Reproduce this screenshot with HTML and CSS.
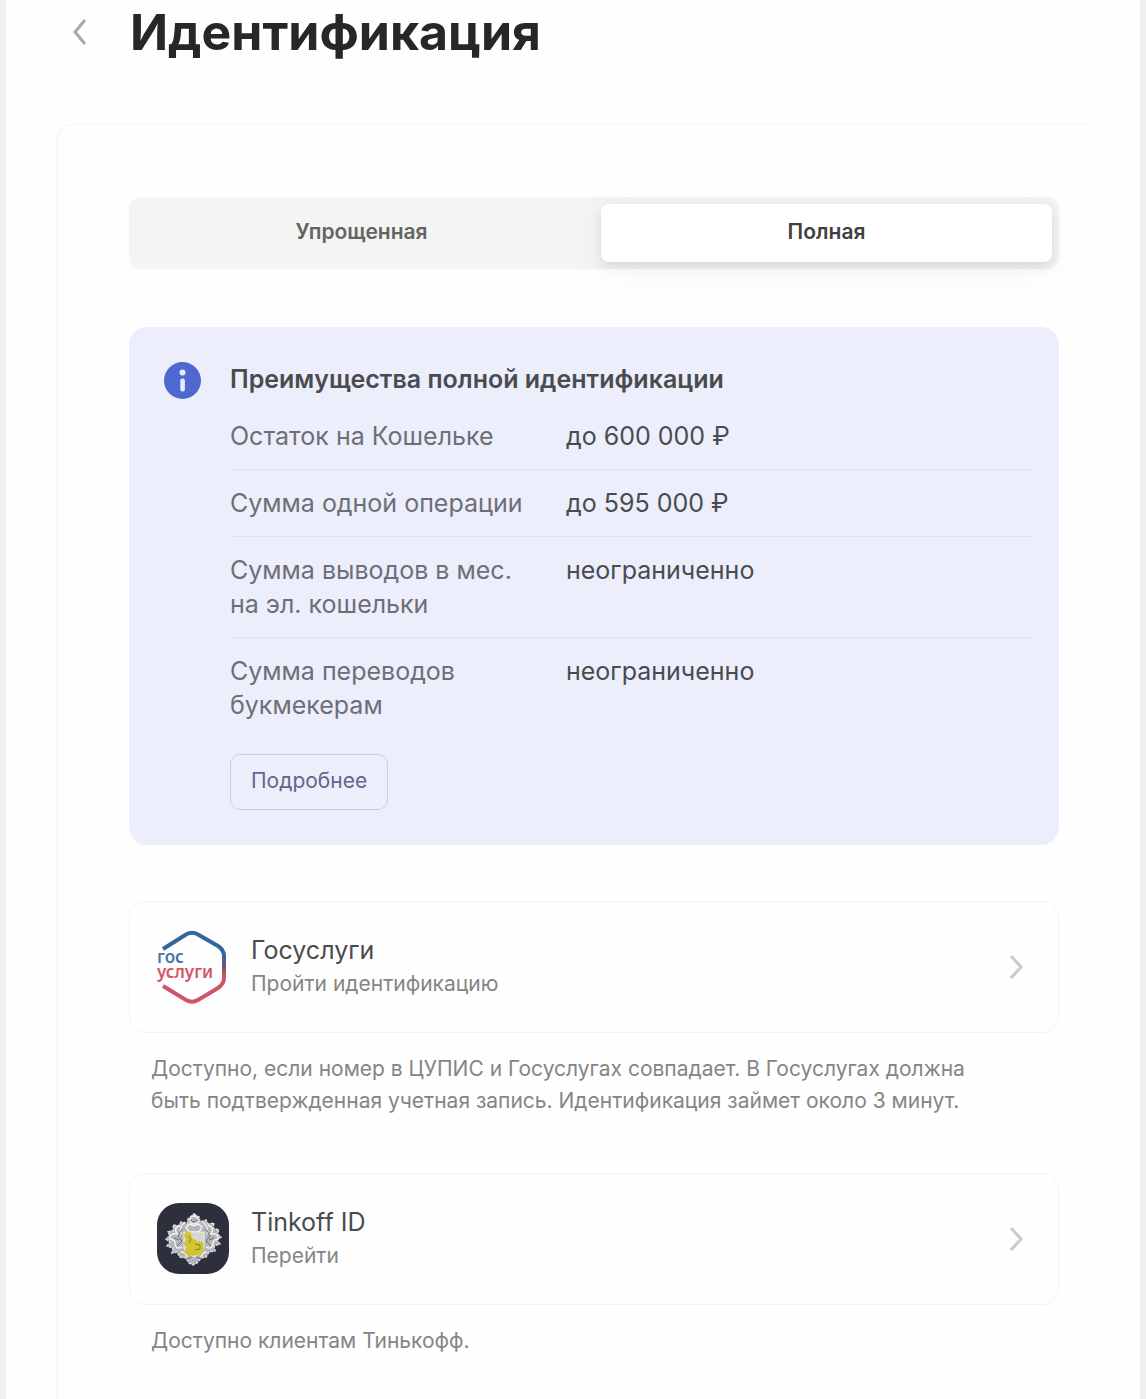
FILE: index.html
```html
<!DOCTYPE html>
<html lang="ru">
<head>
  <meta charset="UTF-8" />
  <meta name="viewport" content="width=device-width, initial-scale=1.0"/>
  <title>Идентификация</title>
  <link rel="stylesheet" href="styles.css">
</head>
<body>

  <div class="page">
    <header class="header">
      <button class="back" type="button" aria-label="Назад">
        <svg width="16" height="28" viewBox="0 0 16 28"><path d="M13 2L3 14l10 12" fill="none" stroke="#a9a9a9" stroke-width="3"/></svg>
      </button>
      <h1>Идентификация</h1>
    </header>

    <main class="content">
      <div class="tabs" role="tablist">
        <button class="tab" type="button" role="tab" aria-selected="false">Упрощенная</button>
        <button class="tab active" type="button" role="tab" aria-selected="true">Полная</button>
      </div>

      <section class="info">
        <svg class="info-icon" width="37" height="37" viewBox="0 0 37 37">
          <circle cx="18.5" cy="18.5" r="18.5" fill="#4f68cf"/>
          <circle cx="18.5" cy="10.5" r="3" fill="#e6eaff"/>
          <rect x="16.3" y="16.5" width="4.6" height="13" rx="2" fill="#e6eaff"/>
        </svg>
        <div class="info-body">
          <h2>Преимущества полной идентификации</h2>
          <table class="limits">
            <tr><th scope="row">Остаток на Кошельке</th><td>до 600 000 ₽</td></tr>
            <tr><th scope="row">Сумма одной операции</th><td>до 595 000 ₽</td></tr>
            <tr><th scope="row">Сумма выводов в мес. на эл. кошельки</th><td>неограниченно</td></tr>
            <tr><th scope="row">Сумма переводов букмекерам</th><td>неограниченно</td></tr>
          </table>
          <button class="more" type="button">Подробнее</button>
        </div>
      </section>

      <a class="method" href="#gosuslugi">
        <svg class="logo" width="72" height="74" viewBox="0 0 72 74">
          <defs>
            <linearGradient id="hex" gradientUnits="userSpaceOnUse" x1="0" y1="0" x2="0" y2="74">
              <stop offset="0.35" stop-color="#33679c"/>
              <stop offset="0.5" stop-color="#75507d"/>
              <stop offset="0.6" stop-color="#cf5566"/>
            </linearGradient>
          </defs>
          <path d="M6 19L29 4.500Q35 1 41 4.500L61 16Q67 20 67 26V48Q67 54 61 58L41 70Q35 73.500 29 70L6 56" fill="none" stroke="url(#hex)" stroke-width="4"/>
          <text class="logo-text"><tspan x="0" y="33" fill="#4477aa">гос</tspan><tspan x="0" y="48" fill="#d4566a">услуги</tspan></text>
        </svg>
        <span class="method-text">
          <span class="method-name">Госуслуги</span>
          <span class="method-action">Пройти идентификацию</span>
        </span>
        <svg class="chevron" width="16" height="26" viewBox="0 0 16 26"><path d="M2 2l10 11L2 24" fill="none" stroke="#cbcbcb" stroke-width="3"/></svg>
      </a>
      <p class="note">Доступно, если номер в ЦУПИС и Госуслугах совпадает. В Госуслугах должна быть подтвержденная учетная запись. Идентификация займет около 3 минут.</p>

      <a class="method" href="#tinkoff">
        <svg class="logo" width="72" height="74" viewBox="0 0 72 74">
          <rect y="1" width="72" height="71" rx="22" fill="#2d303c"/>
          <!-- mantling -->
          <path d="M37 12l5 3 1 5 6-2 2 4 6-1-1 5 6 2-2 4 4 3-4 3 3 4-6 2 1 5-6 1-3 5-5 1-4 5-4 2-4-2-3-5-6-1-3-5-5 1 1-5-6-2 3-4-4-3 4-3-2-4 6-2-1-5 6 1 2-4 6 2 1-5z" fill="#b4b5b8" stroke="#dedede" stroke-width="1.500" stroke-dasharray="3 1"/>
          <g fill="none" stroke="#f1f1f1" stroke-width="1.500">
            <path d="M23 23q-7 3-3 9q-8-1-7 5q6 1 5 5q1 6 7 3M51 23q7 3 3 9q8-1 7 5q-6 1-5 5q-1 6-7 3M28 20q-6 5-4 12M46 20q6 5 4 12M24 50q5 0 6 5M50 50q-5 0-6 5"/>
            <circle cx="37" cy="18" r="4"/>
            <path d="M29 25l4-3 4 2 4-2 4 3-3 5H32z"/>
          </g>
          <g fill="none" stroke="#6b6e76" stroke-width="1">
            <path d="M25 27l-4 7 4 5-5 5M49 27l4 7-4 5 5 5M33 18l4 2 4-2M30 57l7-3 7 3M17 36l5 2M57 36l-5 2"/>
          </g>
          <path d="M27 30h20v16q0 5-10 9q-10-4-10-9z" fill="#d6d6cc" stroke="#eee" stroke-width="1"/>
          <path d="M29 28l5 3 1 5 5 3 6 1 1 9-4 4-12 1-4-4 3-5-4-3 3-4-2-4z" fill="#d2c433"/>
          <path d="M31 34l3 3-2 4M38 42l5 1v4l-5 1" fill="none" stroke="#8a7f28" stroke-width="1"/>
        </svg>
        <span class="method-text">
          <span class="method-name">Tinkoff ID</span>
          <span class="method-action">Перейти</span>
        </span>
        <svg class="chevron" width="16" height="26" viewBox="0 0 16 26"><path d="M2 2l10 11L2 24" fill="none" stroke="#cbcbcb" stroke-width="3"/></svg>
      </a>
      <p class="note">Доступно клиентам Тинькофф.</p>
    </main>
  </div>

</body>
</html>
```

FILE: styles.css
```css
* {
  box-sizing: border-box;
}

body {
  margin: 0;
  padding: 0 6px;
  background-color: #eff0f2;
  color: #4a4b4f;
  font-family: Inter, "Liberation Sans", sans-serif;
  font-size: 25px;
  line-height: 34px;
}

button {
  border: none;
  background: none;
  font-family: inherit;
  cursor: pointer;
}

h1, h2, p {
  margin: 0;
}

.page {
  min-height: 100vh;
  padding: 0 48px 0 50px;
  background-color: #fefefe;
}

.header {
  display: flex;
  align-items: center;
  gap: 28px;
  height: 64px;
  margin-bottom: 60px;
  padding-left: 16px;
}

.back {
  display: flex;
  width: 30px;
  padding: 0;
}

h1 {
  color: #272727;
  font-size: 50px;
  line-height: 64px;
  font-weight: 700;
}

.content {
  min-height: calc(100vh - 124px);
  padding: 72px 33px 41px 71px;
  border-top: 1px solid #f5f5f5;
  border-left: 2px solid #f7f7f7;
  border-top-left-radius: 16px;
}

.tabs {
  display: flex;
  gap: 14px;
  height: 72px;
  margin-bottom: 58px;
  padding: 7px;
  border-radius: 12px;
  background-color: #f4f4f3;
}

.tab {
  flex: 1;
  padding: 0 0 4px;
  border-radius: 8px;
  color: #646464;
  font-size: 21px;
  font-weight: 600;
}

.tab.active {
  background-color: #fff;
  color: #3f4042;
  box-shadow: 0 4px 12px rgba(0, 0, 0, 0.1), 0 8px 40px rgba(0, 0, 0, 0.04);
}

.info {
  display: flex;
  gap: 29px;
  margin-bottom: 56px;
  padding: 35px 29px 35px 35px;
  border-radius: 18px;
  background-color: #eceefb;
}

.info-icon {
  flex: none;
}

.info-body {
  flex: 1;
}

h2 {
  margin-bottom: 7px;
  font-size: 25px;
  line-height: 34px;
  font-weight: 600;
}

.limits {
  width: 100%;
  border-spacing: 0;
}

.limits th,
.limits td {
  padding: 16px 0;
  border-bottom: 1px solid #dfe0ec;
  text-align: left;
  vertical-align: top;
}

.limits th {
  width: 336px;
  padding-right: 40px;
  color: #6d6e76;
  font-weight: 400;
}

.limits tr:last-child th,
.limits tr:last-child td {
  border-bottom: none;
}

.more {
  display: block;
  height: 56px;
  margin-top: 16px;
  padding: 0 20px 4px;
  border: 1px solid #cccedd;
  border-radius: 10px;
  color: #62668c;
  font-size: 21px;
}

.method {
  display: flex;
  align-items: center;
  height: 132px;
  padding: 0 33px 0 27px;
  border: 1px solid #f3f3f3;
  border-radius: 16px;
  color: inherit;
  text-decoration: none;
}

.logo {
  flex: none;
  margin-right: 22px;
}

.logo-text {
  font-family: "Noto Sans", sans-serif;
  font-size: 17px;
  font-weight: 600;
}

.method-text {
  flex: 1;
}

.method-name,
.method-action {
  display: block;
}

.method-action {
  color: #858585;
  font-size: 21px;
}

.note {
  margin: 20px 0 56px;
  padding: 0 60px 0 22px;
  color: #858585;
  font-size: 21px;
  line-height: 32px;
}

.note:last-child {
  margin-bottom: 0;
}
```
